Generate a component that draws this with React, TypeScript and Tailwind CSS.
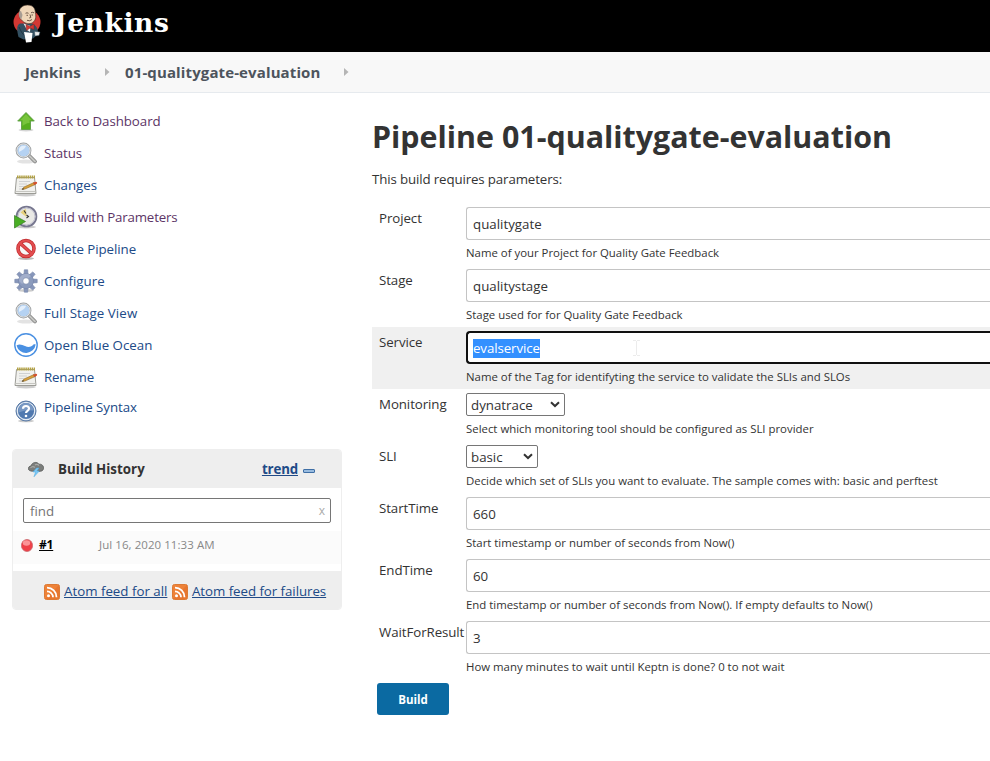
import React from "react";

function JenkinsMark() {
  return (
    <svg width="28" height="40" viewBox="0 0 28 40">
      <ellipse cx="14" cy="18" rx="13.500" ry="12.500" fill="#d33833" />
      <path d="M7 19.500 C3 21 4 27 5.500 33 L10.500 35.500 L20 34.500 L25 30 C25.500 25 23 21 19 19.500Z" fill="#335061" />
      <path d="M6.500 9 C5.500 4 10 1 14.500 1 C20 1 22.500 4.500 22.300 9 C23.500 13 22.500 17.500 18.500 19.200 C15 20.500 11 19 8.500 16 C6.500 14.500 6 12 6.500 9Z" fill="#efd6b8" stroke="#3a2b22" strokeWidth=".6" />
      <path d="M6.500 7.500 C4.800 10 6.300 14 8.300 15.500 L9.500 11 L8 7Z" fill="#a79c92" />
      <path d="M12.500 9.300q1.500-1 3 0M18 8.800q1.500-1 3 0M13.500 11.300h1.500M18.500 11h1.500M17 10.500l.8 3-1.600.5M14 16.300q3 1.300 5-.8" stroke="#4b362b" strokeWidth=".8" fill="none" />
      <path d="M10.500 19.500 L14 26 L17 28 L17.500 22Z" fill="#f5f5f5" />
      <path d="M13 20.500 L17 22.500 L21 20 V25.500 L17 24 L13.500 26.500Z" fill="#d33833" stroke="#81201d" strokeWidth=".5" />
      <path d="M6 23 C8 27 9 30 12 32" stroke="#1d3240" strokeWidth=".8" fill="none" />
      <path d="M11 28 L19.500 29 L18.500 38 L13 38.500 L12 33Z" fill="#fff" />
      <path d="M21.500 27.500L27 28L26 31.500L22 32Z" fill="#ececec" stroke="#335061" strokeWidth=".5" />
    </svg>
  );
}

function UpIcon() {
  return (
    <svg width="24" height="24" viewBox="0 0 24 24">
      <ellipse cx="12" cy="21" rx="7.500" ry="1.500" fill="#bbb" opacity=".6" />
      <path d="M12 3.500 L20.300 12 H16.500 V20.500 H7.500 V12 H3.700Z" fill="#56ae1e" stroke="#5f9f45" strokeWidth=".9" />
      <path d="M12 5 L18 11.300 H15.500 V14 C12 14 10 16 8.500 17 V11.300 H6Z" fill="#8ad04d" opacity=".65" />
    </svg>
  );
}

function SearchIcon() {
  return (
    <svg width="24" height="24" viewBox="0 0 24 24">
      <ellipse cx="12" cy="20.500" rx="9" ry="2" fill="#ccc" opacity=".55" />
      <path d="M15 14.500 L21 20.500" stroke="#858585" strokeWidth="3.800" strokeLinecap="round" />
      <path d="M15 14.500 L21 20.500" stroke="#c4c5c2" strokeWidth="2" strokeLinecap="round" />
      <circle cx="9.500" cy="9.500" r="7" fill="#b5d2f2" stroke="#9b9ea0" strokeWidth="1.800" />
      <circle cx="9.500" cy="9.500" r="6.600" fill="none" stroke="#e6e8e9" strokeWidth="1" />
      <path d="M5 9 C5 5 9 4 12 5 C11 8 8 9 5 11Z" fill="#e4effb" />
    </svg>
  );
}

function NotepadIcon() {
  return (
    <svg width="24" height="24" viewBox="0 0 24 24">
      <ellipse cx="12" cy="22" rx="10" ry="1.500" fill="#ccc" />
      <path d="M2.500 4.500 H20.500 L22 20.500 H1Z" fill="#f1f1ee" stroke="#9c9c96" />
      <path d="M1.500 18.500H21.500" stroke="#c6c6c1" />
      <path d="M3 4 H21" stroke="#b3a244" strokeWidth="3" strokeDasharray="1.500 .6" />
      <path d="M5 8.500H16M5 11H13M5 13.500H10M5 16H9" stroke="#cfd1d2" />
      <path d="M8 16.500 L10 14 L20 9.500 L21.300 11.500 L11 16Z" fill="#d9a03a" stroke="#8d6a2c" strokeWidth=".6" />
      <path d="M19 9.800 L21.500 8.800 C23.500 8.600 23.700 10.500 22.300 11 L20.200 12Z" fill="#d2502f" />
      <path d="M8 16.500l1-1.500 1 1.200Z" fill="#333" />
    </svg>
  );
}

function ClockIcon() {
  return (
    <svg width="24" height="24" viewBox="0 0 24 24">
      <ellipse cx="12" cy="22" rx="10" ry="1.500" fill="#ccc" />
      <circle cx="12.500" cy="11.500" r="9.900" fill="#e9e9e5" stroke="#77778f" strokeWidth="1.800" />
      <circle cx="12.500" cy="11.500" r="8.500" fill="none" stroke="#bdbdcc" />
      <path d="M12.500 12 L6.500 7.500 Q8.500 4.500 12 4Z" fill="#e7d17c" />
      <path d="M10 5.500L12 8.500M12.500 10L14.500 11.500L12.500 13" stroke="#333" strokeWidth="1.100" fill="none" />
      <path d="M.5 10.500 L11.500 16.500 L.5 23Z" fill="#49ae24" stroke="#357d22" strokeWidth=".7" />
    </svg>
  );
}

function DeleteIcon() {
  return (
    <svg width="24" height="24" viewBox="0 0 24 24">
      <ellipse cx="12" cy="21.500" rx="8" ry="1.500" fill="#bbb" />
      <circle cx="12" cy="11.500" r="8" fill="#f7f7f7" stroke="#c02a2d" strokeWidth="3.600" />
      <path d="M6.500 6.500L17.500 16.500" stroke="#c02a2d" strokeWidth="3.600" />
      <circle cx="12" cy="11.500" r="8" fill="none" stroke="#e34e50" strokeWidth="2.200" />
      <path d="M6.500 6.500L17.500 16.500" stroke="#e34e50" strokeWidth="2.200" />
    </svg>
  );
}

function GearIcon() {
  return (
    <svg width="24" height="24" viewBox="0 0 24 24">
      <ellipse cx="12" cy="21.500" rx="8" ry="1.500" fill="#ccc" />
      <g fill="#8796ba" stroke="#7485a8" strokeWidth=".6">
        {[0, 45, 90, 135, 180, 225, 270, 315].map((a) => (
          <path key={a} d="M10 5.500 L10.300 .8 H13.700 L14 5.500Z" transform={`rotate(${a} 12 12)`} />
        ))}
        <circle cx="12" cy="12" r="7.500" />
      </g>
      <circle cx="12" cy="12" r="7" fill="#8b9bbd" />
      <path d="M5 12a7 7 0 0 1 12-5L8 15Z" fill="#adb7d2" opacity=".7" />
      <circle cx="12" cy="12" r="3.300" fill="#fff" stroke="#7485a8" strokeWidth=".7" />
    </svg>
  );
}

function OceanIcon() {
  return (
    <svg width="24" height="24" viewBox="0 0 24 24">
      <circle cx="12" cy="12" r="11.200" fill="#fff" stroke="#4a90e2" strokeWidth="1.400" />
      <path d="M2.500 12.500 C5 10.500 8 11.500 11 13 C14 14.500 17 14 18.500 12.500 C19.500 11 20.500 11 21.700 11.500 A9.800 9.800 0 0 1 2.500 12.500Z" fill="#4a90e2" />
    </svg>
  );
}

function HelpIcon() {
  return (
    <svg width="24" height="24" viewBox="0 0 24 24">
      <ellipse cx="12" cy="22" rx="8" ry="1.300" fill="#ccc" />
      <circle cx="12" cy="12" r="10" fill="#5079af" stroke="#5a7aa5" strokeWidth="1" />
      <circle cx="12" cy="12" r="8.700" fill="none" stroke="#e4ebf3" strokeWidth="1.200" />
      <path d="M4.500 11.500a7.500 7.500 0 0 1 15 0Q12 10.500 4.500 13.500Z" fill="#7898c3" />
      <path d="M9 9.800C9 6 15 6.200 15 9.500C15 12 12 11.700 12 14" stroke="#fff" strokeWidth="2.200" fill="none" />
      <circle cx="12" cy="17" r="1.300" fill="#fff" />
    </svg>
  );
}

function StormIcon() {
  return (
    <svg width="16" height="16" viewBox="0 0 16 16">
      <path d="M3 10 C-1 9.500 0 5 3 5 C4 1 9 .3 11 3.200 C15 2.700 17 7 14.500 9.500 C13 11 5 10.500 3 10Z" fill="#7b7d7b" stroke="#565857" strokeWidth=".8" />
      <path d="M2.500 7Q4.500 4.500 7 6.500M7 4Q9 2.500 11 4.500" stroke="#a7a9a7" strokeWidth="1.200" fill="none" />
      <path d="M8.500 7L5 11H7.500L6 15.800L11.300 10H8.800L11 7Z" fill="#7cc8f5" stroke="#4aa8e0" strokeWidth=".5" />
    </svg>
  );
}

function RssIcon() {
  return (
    <svg width="16" height="16" viewBox="0 0 16 16" className="shrink-0">
      <rect x=".5" y=".5" width="15" height="15" rx="2" fill="#ee8238" stroke="#dd7a35" />
      <path d="M1 15L15 1V13Q15 15 13 15Z" fill="#dc6423" opacity=".4" />
      <circle cx="4.500" cy="11.700" r="1.500" fill="#fff" />
      <path d="M3 7.300A6 6 0 0 1 9 13.200M3 3.700A9.500 9.500 0 0 1 12.500 13.200" stroke="#fff" strokeWidth="1.800" fill="none" />
    </svg>
  );
}

function Arrow() {
  return (
    <svg width="5" height="8" viewBox="0 0 5 8">
      <path d="M0 0L4.500 4L0 8Z" fill="#b5b5b5" />
    </svg>
  );
}

const tasks = [
  { label: "Back to Dashboard", Icon: UpIcon, style: "text-[#5c3566] tracking-[-0.06px]" },
  { label: "Status", Icon: SearchIcon, style: "text-[#5c3566] tracking-[-0.1px]" },
  { label: "Changes", Icon: NotepadIcon, style: "text-[#204a87]" },
  { label: "Build with Parameters", Icon: ClockIcon, style: "text-[#5c3566] tracking-[-0.17px]" },
  { label: "Delete Pipeline", Icon: DeleteIcon, style: "text-[#204a87] tracking-[-0.05px]" },
  { label: "Configure", Icon: GearIcon, style: "text-[#204a87]" },
  { label: "Full Stage View", Icon: SearchIcon, style: "text-[#204a87] tracking-[0.1px]" },
  { label: "Open Blue Ocean", Icon: OceanIcon, style: "text-[#204a87]" },
  { label: "Rename", Icon: NotepadIcon, style: "text-[#204a87] tracking-[-0.15px]" },
];

type Param = {
  name: string;
  value: string;
  help: string;
  kind?: "select" | "focus";
  width?: string;
};

const params: Param[] = [
  { name: "Project", value: "qualitygate", help: "Name of your Project for Quality Gate Feedback" },
  { name: "Stage", value: "qualitystage", help: "Stage used for for Quality Gate Feedback" },
  { name: "Service", value: "evalservice", help: "Name of the Tag for identifyting the service to validate the SLIs and SLOs", kind: "focus" },
  { name: "Monitoring", value: "dynatrace", help: "Select which monitoring tool should be configured as SLI provider", kind: "select", width: "w-[99px]" },
  { name: "SLI", value: "basic", help: "Decide which set of SLIs you want to evaluate. The sample comes with: basic and perftest", kind: "select", width: "w-[72px]" },
  { name: "StartTime", value: "660", help: "Start timestamp or number of seconds from Now()" },
  { name: "EndTime", value: "60", help: "End timestamp or number of seconds from Now(). If empty defaults to Now()" },
  { name: "WaitForResult", value: "3", help: "How many minutes to wait until Keptn is done? 0 to not wait" },
];

function Field({ p }: { p: Param }) {
  if (p.kind === "select") {
    return (
      <div className={`flex h-[23px] items-center justify-between rounded-[2px] border border-[#767676] bg-white pl-1 pr-1 pt-px text-[13.3px] ${p.width}`}>
        <span>{p.value}</span>
        <svg width="10" height="7" viewBox="0 0 10 7" className="mb-px">
          <path d="M1 1.200L5 5L9 1.200" fill="none" stroke="#333" strokeWidth="2" />
        </svg>
      </div>
    );
  }
  if (p.kind === "focus") {
    return (
      <div className="flex h-[33px] items-center rounded-l-[4px] border-2 border-r-0 border-[#101010] bg-white pl-[5px] pt-px text-[13.3px]">
        <span className="bg-[#3390ff] leading-[19px] tracking-[-0.1px] text-white">{p.value}</span>
        <svg width="7" height="16" viewBox="0 0 7 16" className="ml-[93px]">
          <path d="M0 .5H3M4 .5H7M3.500 1V15M0 15.500H3M4 15.500H7" stroke="#ececec" fill="none" />
        </svg>
      </div>
    );
  }
  return (
    <div className="flex h-[33px] items-center rounded-l-[3px] border border-r-0 border-[#c4c4c4] bg-white pl-[6px] text-[13.3px]">
      {p.value}
    </div>
  );
}

export default function App() {
  return (
    <div className="h-[761px] w-[990px] overflow-hidden bg-white font-['Open_Sans','Noto_Sans',sans-serif] text-[13.3px] leading-5 text-[#333]">
      <header className="flex h-[52px] bg-black pl-[13px] pt-[4px]">
        <JenkinsMark />
        <span className="ml-[13px] mt-[3px] font-['DejaVu_Serif',serif] text-[26.5px] font-bold leading-8 tracking-[0.6px] text-white">Jenkins</span>
      </header>
      <nav className="flex h-[41px] items-center border-b border-[#e6eaee] bg-[#f8f8f8] pl-[25px] text-[15px] font-bold tracking-[0.12px] text-[#4d545d]">
        <span className="w-[80px]">Jenkins</span>
        <Arrow />
        <span className="ml-[15px] w-[219px]">01-qualitygate-evaluation</span>
        <Arrow />
      </nav>
      <div className="flex">
        <aside className="w-[372px] shrink-0 pl-3 pt-3">
          <ul>
            {tasks.map(({ label, Icon, style }) => (
              <li key={label} className="flex h-8 items-center pl-[2px]">
                <Icon />
                <a className={`ml-[6px] ${style}`}>{label}</a>
              </li>
            ))}
            <li className="flex h-8 pl-[2px] pt-1">
              <div className="pt-[2px]">
                <HelpIcon />
              </div>
              <a className="ml-[6px] tracking-[-0.07px] text-[#204a87]">Pipeline Syntax</a>
            </li>
          </ul>
          <section className="mt-[24px] h-[161px] w-[330px] overflow-hidden rounded-[4px] border border-[#eee]">
            <div className="flex h-[38px] items-center bg-[#eee] pl-[15px] pr-[26px] font-bold">
              <StormIcon />
              <span className="ml-[14px] grow tracking-[0.05px]">Build History</span>
              <a className="tracking-[-0.15px] text-[#204a87] underline">trend</a>
              <span className="ml-[5px] mt-[3px] h-[4px] w-3 rounded-[1px] border border-[#3e6ea5] bg-[#98bbdf]" />
            </div>
            <div className="ml-[10px] mt-[10px] flex h-[25px] w-[308px] items-center justify-between rounded-[2px] border border-[#767676] pl-[6px] pr-[5px] text-[#757575]">
              <span>find</span>
              <span className="text-xs text-[#aaa]">x</span>
            </div>
            <div className="mt-2 flex h-[33px] bg-[#fbfbfb] pl-[8px] pt-1">
              <svg width="12" height="13" viewBox="0 0 12 13" className="mt-1">
                <ellipse cx="6" cy="6.500" rx="5.600" ry="6" fill="#ef4048" stroke="#c96a6e" strokeWidth=".8" />
                <ellipse cx="5.500" cy="4" rx="3.700" ry="2.700" fill="#ffb0b2" opacity=".75" />
              </svg>
              <a className="ml-[6px] w-[60px] text-xs font-bold leading-5 tracking-[-0.2px] text-black underline">#1</a>
              <span className="text-[11.5px] tracking-[0.06px] text-[#888]">Jul 16, 2020 11:33 AM</span>
            </div>
            <div className="mt-[7px] flex h-[39px] items-center bg-[#eee] pl-[31px] text-[#204a87]">
              <div className="mt-[3px]"><RssIcon /></div>
              <a className="ml-1 w-[108px] underline">Atom feed for all</a>
              <div className="mt-[3px]"><RssIcon /></div>
              <a className="ml-1 tracking-[-0.05px] underline">Atom feed for failures</a>
            </div>
          </section>
        </aside>
        <main className="grow pt-[24px]">
          <h1 className="h-10 whitespace-nowrap text-[30.4px] font-bold leading-10">Pipeline 01-qualitygate-evaluation</h1>
          <p className="mt-[12px] tracking-[-0.13px]">This build requires parameters:</p>
          <div className="mt-[14px]">
            {params.map((p) => (
              <div
                key={p.name}
                className={`flex pt-1 ${p.kind === "select" ? "h-[52px]" : "h-[62px]"} ${p.kind === "focus" ? "bg-[#f0f0f0]" : ""}`}
              >
                <label className="w-[94px] shrink-0 pl-[7px] pt-[1px] tracking-[-0.08px]">{p.name}</label>
                <div className="grow">
                  <Field p={p} />
                  <div className="mt-[3px] whitespace-nowrap text-[11.4px] leading-5">{p.help}</div>
                </div>
              </div>
            ))}
          </div>
          <button className="ml-[5px] mt-1 h-8 w-[72px] rounded-[3px] bg-[#0b6aa2] pt-px text-[11.5px] font-bold text-white">Build</button>
        </main>
      </div>
    </div>
  );
}
